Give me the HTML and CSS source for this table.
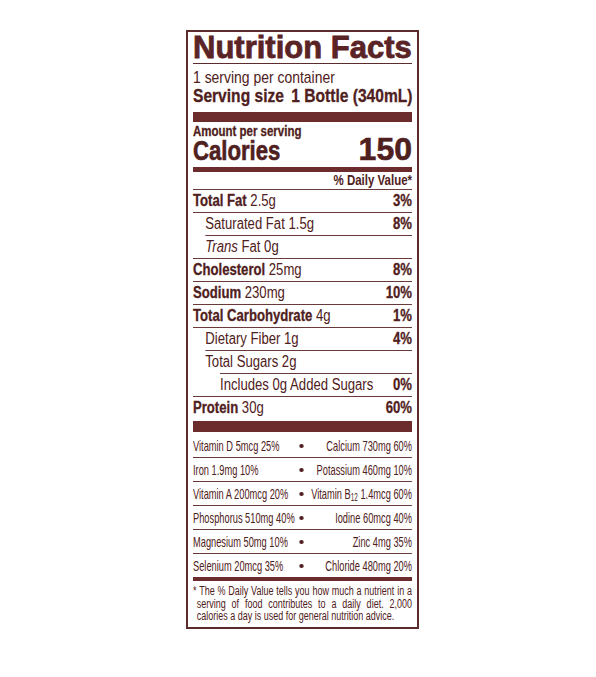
FILE: index.html
```html
<!DOCTYPE html>
<html lang="en">
<head>
  <meta charset="UTF-8" />
  <meta name="viewport" content="width=device-width, initial-scale=1.0" />
  <title>Nutrition Facts</title>
  <link rel="stylesheet" href="styles.css">
</head>
<body>
  <div class="label">
    <h1 class="title">Nutrition Facts</h1>

    <div class="servings squeeze">
      <p class="per-container">1 serving per container</p>
      <p class="serving-size"><span class="size-name">Serving size</span><span>1 Bottle (340mL)</span></p>
    </div>

    <div class="bar bar-thick"></div>

    <div class="calories">
      <div class="cal-left">
        <p class="amount">Amount per serving</p>
        <p class="cal-label">Calories</p>
      </div>
      <p class="cal-value">150</p>
    </div>

    <div class="bar bar-medium"></div>

    <div class="dv-wrap">
      <p class="dv-head">% Daily Value*</p>
    </div>

    <ul class="nutrients squeeze">
      <li><span><b>Total Fat</b> 2.5g</span><b>3%</b></li>
      <li class="sub"><span>Saturated Fat 1.5g</span><b>8%</b></li>
      <li class="sub-line"><span><i>Trans</i> Fat 0g</span></li>
      <li><span><b>Cholesterol</b> 25mg</span><b>8%</b></li>
      <li><span><b>Sodium</b> 230mg</span><b>10%</b></li>
      <li><span><b>Total Carbohydrate</b> 4g</span><b>1%</b></li>
      <li class="sub"><span>Dietary Fiber 1g</span><b>4%</b></li>
      <li class="sub-line"><span>Total Sugars 2g</span></li>
      <li class="sub-line2"><span>Includes 0g Added Sugars</span><b>0%</b></li>
      <li class="last"><span><b>Protein</b> 30g</span><b>60%</b></li>
    </ul>

    <div class="bar bar-thick2"></div>

    <ul class="vitamins squeeze">
      <li><span>Vitamin D 5mcg 25%</span><span class="dot"><i></i></span><span class="vit-right">Calcium 730mg 60%</span></li>
      <li><span>Iron 1.9mg 10%</span><span class="dot"><i></i></span><span class="vit-right">Potassium 460mg 10%</span></li>
      <li><span>Vitamin A 200mcg 20%</span><span class="dot"><i></i></span><span class="vit-right">Vitamin B<sub>12</sub> 1.4mcg 60%</span></li>
      <li><span>Phosphorus 510mg 40%</span><span class="dot"><i></i></span><span class="vit-right">Iodine 60mcg 40%</span></li>
      <li><span>Magnesium 50mg 10%</span><span class="dot"><i></i></span><span class="vit-right">Zinc 4mg 35%</span></li>
      <li><span>Selenium 20mcg 35%</span><span class="dot"><i></i></span><span class="vit-right">Chloride 480mg 20%</span></li>
    </ul>

    <div class="bar bar-medium2"></div>

    <p class="footnote squeeze">
      <span class="fn-line fn-just fn-first">* The % Daily Value tells you how much a nutrient in a</span>
      <span class="fn-line fn-just">serving of food contributes to a daily diet. 2,000</span>
      <span class="fn-line">calories a day is used for general nutrition advice.</span>
    </p>
  </div>
</body>
</html>
```

FILE: styles.css
```css
* {
  box-sizing: border-box;
}
body {
  margin: 0;
  background: #fff;
  color: #4f2020;
  font-family: "Liberation Sans", Arial, sans-serif;
}
p {
  margin: 0;
}
ul {
  list-style: none;
  margin: 0;
  padding: 0;
}
b {
  -webkit-text-stroke: 0.3px currentColor;
}
.label {
  width: 233px;
  margin: 30px 0 0 186px;
  border: 2px solid #5c2b2b;
  padding: 0 5px;
}

/* condensed type: the block is laid out wider, then squeezed back */
.squeeze {
  --sx: 0.82;
  width: calc(100% / var(--sx));
  transform: scaleX(var(--sx));
  transform-origin: left top;
}

.title {
  margin: 0;
  font-size: 31px;
  line-height: 31px;
  font-weight: bold;
  white-space: nowrap;
  color: #5a2426;
  -webkit-text-stroke: 0.8px currentColor;
  border-bottom: 1px solid #5c2b2b;
}
.per-container {
  padding-top: 5px;
  font-size: 17px;
  line-height: 17px;
}
.serving-size {
  font-size: 19px;
  line-height: 20px;
  font-weight: bold;
  white-space: nowrap;
  -webkit-text-stroke: 0.3px currentColor;
}
.size-name {
  margin-right: 9px;
}
.bar {
  background: #6c2c2e;
}
.bar-thick {
  height: 10px;
  margin-top: 6px;
}
.bar-thick2 {
  height: 11px;
}
.bar-medium {
  height: 5px;
  margin-top: 2px;
}
.bar-medium2 {
  height: 4px;
}
.calories {
  display: flex;
  justify-content: space-between;
  align-items: last baseline;
  padding-top: 2px;
}
.cal-left {
  transform: scaleX(0.82);
  transform-origin: left top;
  white-space: nowrap;
}
.amount {
  font-size: 14px;
  line-height: 14px;
  font-weight: bold;
  -webkit-text-stroke: 0.3px currentColor;
}
.cal-label {
  font-size: 27px;
  line-height: 27px;
  font-weight: bold;
  -webkit-text-stroke: 0.6px currentColor;
}
.cal-value {
  font-size: 32px;
  line-height: 30px;
  font-weight: bold;
  -webkit-text-stroke: 0.6px currentColor;
}
.dv-wrap {
  border-bottom: 1px solid #6a3a3a;
}
.dv-head {
  text-align: right;
  font-size: 14px;
  line-height: 17px;
  font-weight: bold;
  transform: scaleX(0.82);
  transform-origin: right top;
}
.nutrients li {
  display: flex;
  justify-content: space-between;
  font-size: 16px;
  line-height: 22px;
  white-space: nowrap;
  border-top: 1px solid #6a3a3a;
}
.nutrients li:first-child {
  border-top: none;
}
.nutrients .sub {
  padding-left: 15px;
}
.nutrients .sub-line {
  margin-left: 15px;
}
.nutrients .sub-line2 {
  margin-left: 33px;
}
.nutrients .last {
  padding-bottom: 2px;
}
.vitamins {
  --sx: 0.64;
}
.vitamins li {
  display: grid;
  grid-template-columns: 160px 18px 1fr;
  align-items: baseline;
  font-size: 14.5px;
  line-height: 21px;
  padding-top: 2px;
  border-top: 1px solid #6a3a3a;
  white-space: nowrap;
}
.vitamins li:first-child {
  border-top: none;
  padding-top: 4px;
}
.vit-right {
  text-align: right;
}
.vit-right sub {
  font-size: 10px;
  line-height: 0;
  vertical-align: -2px;
}
.dot {
  text-align: center;
}
.dot i {
  display: inline-block;
  width: 7px;
  height: 4px;
  border-radius: 50%;
  background: #4f2020;
  vertical-align: 3px;
}
.footnote {
  --sx: 0.75;
  padding: 4px 0 4px 5px;
  font-size: 12px;
  line-height: 12.5px;
}
.fn-line {
  display: block;
  white-space: nowrap;
}
.fn-first {
  margin-left: -5px;
}
.fn-just {
  text-align: justify;
  text-align-last: justify;
}
```
